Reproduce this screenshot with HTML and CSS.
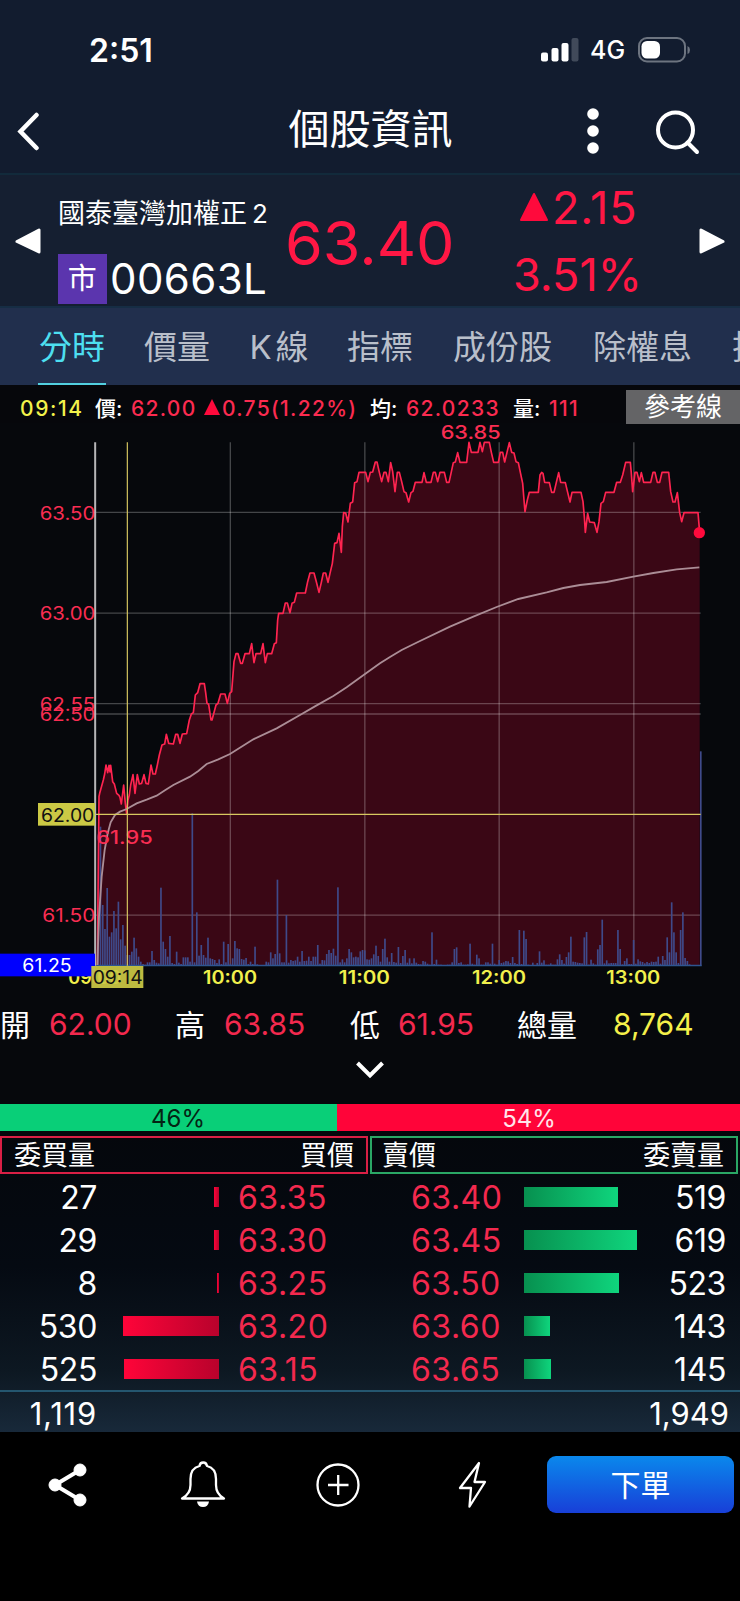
FILE: index.html
```
<!DOCTYPE html>
<html lang="zh-Hant">
<head>
  <meta charset="utf-8">
  <title>個股資訊</title>
  <link rel="stylesheet" href="styles.css">
</head>
<body>
  <div class="status-bar">
    <span class="clock">2:51</span>
    <svg class="signal" width="38" height="24" viewBox="0 0 38 24">
      <rect x="0" y="14.5" width="7" height="9" rx="2"/>
      <rect x="10.5" y="10" width="7" height="13.5" rx="2"/>
      <rect x="20.5" y="5" width="7" height="18.5" rx="2"/>
      <rect class="dim" x="30.5" y="0" width="7" height="23.5" rx="2"/>
    </svg>
    <span class="network">4G</span>
    <svg class="battery" width="53" height="26" viewBox="0 0 53 26">
      <rect class="shell" x="1" y="1" width="46" height="23.5" rx="8"/>
      <rect x="3.5" y="4" width="18.5" height="17.5" rx="5.5"/>
      <path class="nub" d="M49.5 9v8q2.500-1 2.500-4t-2.500-4z"/>
    </svg>
  </div>

  <div class="header">
    <svg class="back" width="26" height="40" viewBox="0 0 26 40"><path d="M21.500 4L5.500 20.500L21.500 37"/></svg>
    <h1>個股資訊</h1>
    <svg class="more" width="12" height="48" viewBox="0 0 12 48">
      <circle cx="6" cy="7" r="5.800"/><circle cx="6" cy="24" r="5.800"/><circle cx="6" cy="41" r="5.800"/>
    </svg>
    <svg class="search" width="46" height="46" viewBox="0 0 46 46"><circle cx="20.500" cy="20" r="17.500"/><path d="M32.500 32.500L42 42"/></svg>
  </div>

  <div class="quote">
    <svg class="prev" width="26" height="26" viewBox="0 0 26 26"><path d="M24 2V24L2 13.500Z"/></svg>
    <div class="stock">
      <div class="stock-name">國泰臺灣加權正<span>2</span></div>
      <div class="stock-code"><span class="badge">市</span><span>00663L</span></div>
    </div>
    <div class="price">63.40</div>
    <div class="change">
      <div class="diff"><svg width="30" height="30" viewBox="0 0 30 30"><path d="M15 2L28 28H2Z"/></svg><span>2.15</span></div>
      <div class="percent">3.51%</div>
    </div>
    <svg class="next" width="26" height="26" viewBox="0 0 26 26"><path d="M2 2V24L24 13.500Z"/></svg>
  </div>

  <div class="tabs">
    <span class="active">分時</span>
    <span>價量</span>
    <span class="k-tab">K<i></i>線</span>
    <span>指標</span>
    <span class="wide">成份股</span>
    <span class="wide">除權息</span>
    <span>技術</span>
  </div>

  <div class="chart-info">
    <span class="time">09:14</span>
    <span class="label">價:</span>
    <span class="value v-price">62.00</span>
    <svg width="16" height="16" viewBox="0 0 16 16"><path d="M8 0L16 16H0Z"/></svg>
    <span class="value v-diff">0.75(1.22%)</span>
    <span class="label">均:</span>
    <span class="value v-avg">62.0233</span>
    <span class="label">量:</span>
    <span class="value v-vol">111</span>
    <span class="ref-button">參考線</span>
  </div>

  <!-- chart units are 1/3 px -->
  <svg class="chart" width="740" height="572" viewBox="0 9 2220 1716">
    <polygon class="area" id="area"/>
    <g class="grid">
      <path d="M270 277H2102M270 579.500H2102M270 851H2102M270 882H2102M270 1485.500H2102"/>
      <path d="M691 67V1635M1094.500 67V1635M1497.500 67V1635M1901.500 67V1635"/>
    </g>
    <g class="volume" id="volume"></g>
    <path class="base" d="M286 1636.500H2105"/>
    <path class="axis" d="M285.500 67V1637"/>

    <g class="y-labels">
      <text x="119" y="299" textLength="167" lengthAdjust="spacingAndGlyphs">63.50</text>
      <text x="119" y="601" textLength="167" lengthAdjust="spacingAndGlyphs">63.00</text>
      <text x="119" y="872" textLength="167" lengthAdjust="spacingAndGlyphs">62.55</text>
      <text x="119" y="903" textLength="167" lengthAdjust="spacingAndGlyphs">62.50</text>
      <text x="127" y="1507" textLength="159" lengthAdjust="spacingAndGlyphs">61.50</text>
    </g>

    <polyline class="line" id="line" points="292,1635 297,1130 299,1120 305,1098 310,1080 314,1062 318,1035 323,1058 327,1036 330,1056 332,1036 338,1085 343,1092 350,1120 357,1126 360,1132 364,1152 371,1095 376,1150 380,1182 384,1140 388,1125 392,1095 399,1064 405,1120 412,1064 418,1092 425,1090 432,1064 438,1090 445,1092 453,1035 459,1062 466,1062 472,1035 478,1005 486,975 494,972 499,943 506,970 520,972 527,943 533,943 540,970 547,942 560,941 568,900 574,882 580,878 586,825 593,818 600,791 613,791 617,818 621,850 626,853 633,900 636,900 648,855 654,850 662,822 675,822 682,850 689,820 695,815 702,725 708,701 714,701 722,730 727,730 735,701 748,701 755,671 762,728 768,701 782,701 789,671 796,728 802,701 815,701 823,671 829,668 833,600 836,580 849,580 856,549 862,549 870,578 876,550 883,547 890,519 916,519 923,485 930,459 942,459 949,485 957,517 964,487 970,459 977,459 984,487 990,460 997,430 1004,370 1011,368 1017,340 1024,397 1027,320 1031,278 1037,279 1044,306 1051,250 1058,246 1064,188 1071,185 1077,157 1097,157 1104,185 1111,157 1118,156 1126,126 1131,126 1138,157 1145,185 1152,157 1158,157 1165,185 1172,128 1178,155 1185,215 1192,157 1198,157 1205,185 1212,215 1218,218 1226,246 1233,218 1239,214 1246,187 1266,187 1272,158 1279,187 1293,187 1300,157 1306,157 1313,185 1320,157 1333,157 1340,187 1347,187 1353,160 1360,128 1366,126 1373,98 1380,127 1400,127 1407,67 1414,97 1434,97 1440,67 1447,95 1453,67 1468,67 1474,97 1481,127 1495,127 1501,97 1508,97 1514,126 1521,97 1528,68 1535,97 1542,99 1548,125 1555,128 1561,157 1568,190 1572,240 1575,275 1582,240 1588,217 1615,217 1620,165 1625,157 1629,160 1634,187 1648,188 1655,217 1662,217 1669,187 1676,158 1682,187 1696,188 1703,217 1710,246 1716,217 1743,217 1749,245 1753,290 1756,337 1763,280 1769,306 1783,308 1791,337 1797,305 1803,250 1810,245 1817,217 1842,217 1850,187 1861,187 1868,165 1877,127 1891,127 1894,160 1898,215 1905,157 1911,157 1918,185 1924,158 1931,187 1952,187 1959,157 1965,157 1972,187 1979,187 1986,157 2006,157 2012,215 2019,246 2025,246 2032,218 2039,278 2045,305 2052,278 2094,278 2099,338"/>
    <polyline class="average" points="292,1635 297,1490 305,1370 314,1290 323,1240 332,1207 345,1185 360,1175 380,1167 410,1150 440,1139 470,1127 495,1111 520,1095 570,1070 595,1053 620,1032 655,1018 690,1002 760,958 830,925 900,885 950,856 1000,828 1040,802 1095,762 1140,730 1170,711 1205,690 1260,663 1350,620 1420,590 1490,561 1555,537 1640,517 1690,504 1740,495 1820,486 1900,470 1960,459 2030,448 2098,442"/>
    <circle class="dot" cx="2098" cy="338" r="17"/>
    <g class="extremes">
      <text x="1322" y="57" textLength="180" lengthAdjust="spacingAndGlyphs">63.85</text>
      <text x="289" y="1273" textLength="169" lengthAdjust="spacingAndGlyphs">61.95</text>
    </g>
    <path class="cross" d="M288 1183H2102M382 67V1637"/>

    <g class="x-labels">
      <text x="205" y="1692" textLength="158">09:00</text>
      <text x="609" y="1692" textLength="162" lengthAdjust="spacingAndGlyphs">10:00</text>
      <text x="1016" y="1692" textLength="154" lengthAdjust="spacingAndGlyphs">11:00</text>
      <text x="1416" y="1692" textLength="162" lengthAdjust="spacingAndGlyphs">12:00</text>
      <text x="1819" y="1692" textLength="162" lengthAdjust="spacingAndGlyphs">13:00</text>
    </g>
    <rect class="tag" x="114" y="1149" width="171" height="68"/>
    <text class="tag-text" x="123" y="1205" textLength="160" lengthAdjust="spacingAndGlyphs">62.00</text>
    <rect class="prev-close" x="0" y="1601" width="285" height="68"/>
    <text class="prev-text" x="67" y="1656" textLength="148" lengthAdjust="spacingAndGlyphs">61.25</text>
    <rect class="tag see-through" x="274" y="1638" width="156" height="66"/>
    <text class="tag-text" x="278" y="1692" textLength="150" lengthAdjust="spacingAndGlyphs">09:14</text>
  </svg>

  <div class="summary">
    <span class="name">開</span><span class="num">62.00</span>
    <span class="name">高</span><span class="num">63.85</span>
    <span class="name">低</span><span class="num">61.95</span>
    <span class="name">總量</span><span class="num total">8,764</span>
  </div>
  <div class="expand">
    <svg width="30" height="20" viewBox="0 0 30 20"><path d="M2.500 3L15 15.500L27.500 3"/></svg>
  </div>

  <div class="ratio">
    <div class="ratio-buy">46%</div>
    <div class="ratio-sell">54%</div>
  </div>

  <div class="book">
    <div class="book-head">
      <div class="head-buy"><span>委買量</span><span>買價</span></div>
      <div class="head-sell"><span>賣價</span><span>委賣量</span></div>
    </div>
    <div class="row"><span class="qty">27</span><i class="buy" style="width:5px"></i><span class="bid">63.35</span><span class="ask">63.40</span><i class="sell" style="width:94px"></i><span class="qty">519</span></div>
    <div class="row"><span class="qty">29</span><i class="buy" style="width:5px"></i><span class="bid">63.30</span><span class="ask">63.45</span><i class="sell" style="width:113px"></i><span class="qty">619</span></div>
    <div class="row"><span class="qty">8</span><i class="buy" style="width:2px"></i><span class="bid">63.25</span><span class="ask">63.50</span><i class="sell" style="width:95px"></i><span class="qty">523</span></div>
    <div class="row"><span class="qty">530</span><i class="buy" style="width:96px"></i><span class="bid">63.20</span><span class="ask">63.60</span><i class="sell" style="width:26px"></i><span class="qty">143</span></div>
    <div class="row"><span class="qty">525</span><i class="buy" style="width:95px"></i><span class="bid">63.15</span><span class="ask">63.65</span><i class="sell" style="width:27px"></i><span class="qty">145</span></div>
    <div class="sum"><span>1,119</span><span>1,949</span></div>
  </div>

  <div class="toolbar">
    <div class="tool">
      <svg width="46" height="50" viewBox="0 0 46 50" class="share"><path d="M35 10L10 25L35 40"/><circle cx="35" cy="10" r="6"/><circle cx="10" cy="25" r="6"/><circle cx="35" cy="40" r="6"/></svg>
    </div>
    <div class="tool">
      <svg width="46" height="50" viewBox="0 0 46 50"><path d="M2 38.500Q10.500 34 10.500 25V19Q10.500 8 19.500 6Q20 2.500 23.200 2.500T27 6Q36 8 36 19V25Q36 34 44 38.500Z"/><path class="solid" d="M17 41.500H29Q28 47 23 47T17 41.500Z"/></svg>
    </div>
    <div class="tool">
      <svg width="46" height="50" viewBox="0 0 46 50"><circle cx="23" cy="25" r="20.500"/><path class="plus" d="M13 25H33.500M23.200 15V35"/></svg>
    </div>
    <div class="tool">
      <svg width="46" height="50" viewBox="0 0 46 50"><path d="M29 3L10 28H21L19.500 46.500L35 22H24.500Z"/></svg>
    </div>
    <button class="order">下單</button>
  </div>

  <script src="chart.js"></script>
</body>
</html>
```
FILE: styles.css
```
* {
  box-sizing: border-box;
}

body {
  margin: 0;
  width: 740px;
  height: 1601px;
  overflow: hidden;
  background: #000;
  color: #fff;
  font-family: Inter, "Noto Sans CJK TC", sans-serif;
}

svg {
  display: block;
  flex: none;
}

.status-bar {
  height: 92px;
  padding: 8px 49px 0 89px;
  background: #121c2f;
  display: flex;
  align-items: center;
}
.clock {
  flex: 1;
  font-size: 32px;
  font-weight: 600;
}
.signal {
  fill: #fff;
}
.signal .dim {
  fill: #414a5a;
}
.network {
  width: 59px;
  padding-left: 11px;
  font-size: 25px;
  font-weight: 500;
}
.battery {
  fill: #fff;
}
.battery .shell {
  fill: none;
  stroke: #6d7480;
  stroke-width: 2;
}
.battery .nub {
  fill: #6d7480;
}

.header {
  height: 83px;
  padding: 0 39px 4px 15px;
  background: #121c2f;
  border-bottom: 2px solid #122a3b;
  display: flex;
  align-items: center;
}
.header h1 {
  margin: 0 0 9px;
  width: 546px;
  padding-left: 113px;
  text-align: center;
  font-size: 41px;
  font-weight: 400;
}
.back {
  fill: none;
  stroke: #fff;
  stroke-width: 4.5;
  stroke-linecap: round;
}
.more {
  fill: #fff;
}
.search {
  margin: 4px 0 0 56px;
  fill: none;
  stroke: #fff;
  stroke-width: 4;
  stroke-linecap: round;
}

.quote {
  height: 133px;
  padding: 0 15px;
  background: #151f31;
  border-bottom: 2px solid #162d44;
  display: flex;
  align-items: center;
  white-space: nowrap;
}
.prev, .next {
  fill: #fff;
  stroke: #fff;
  stroke-width: 3;
  stroke-linejoin: round;
}
.next {
  margin-left: auto;
}
.stock {
  width: 244px;
  padding-left: 17px;
}
.stock-name {
  height: 76px;
  line-height: 76px;
  font-size: 27px;
}
.stock-name span {
  margin-left: 5px;
  font-size: 26px;
}
.stock-code {
  height: 54px;
  display: flex;
  align-items: center;
  font-size: 42px;
  letter-spacing: 0.4px;
}
.badge {
  width: 49px;
  height: 50px;
  margin-right: 3px;
  background: #5b35ae;
  font-size: 29px;
  line-height: 50px;
  text-align: center;
}
.price {
  width: 228px;
  padding-top: 4px;
  color: #ff1744;
  font-size: 61px;
}
.change {
  width: 171px;
  color: #ff1744;
  font-size: 45px;
  line-height: 67px;
}
.diff {
  display: flex;
  align-items: center;
  padding-left: 6px;
  letter-spacing: 0.8px;
}
.diff svg {
  margin-right: 3px;
  fill: #ff0a3c;
  stroke: #ff0a3c;
  stroke-width: 2;
  stroke-linejoin: round;
}

.tabs {
  height: 77px;
  padding-left: 38px;
  background: #212f4d;
  display: flex;
  overflow: hidden;
  color: #b9bfca;
  font-size: 33px;
  line-height: 78px;
  white-space: nowrap;
}
.tabs span {
  flex: none;
  width: 68px;
  height: 77px;
  margin-right: 37px;
  text-align: center;
}
.tabs .active {
  color: #4ddff0;
  border-bottom: 2px solid #52d0e0;
}
.tabs .k-tab {
  width: 62px;
  margin-right: 36px;
}
.tabs .k-tab i {
  padding-left: 4px;
}
.tabs .wide {
  width: 103px;
}

.chart-info {
  height: 38px;
  padding: 5px 0 0 20px;
  background: #06070b;
  display: flex;
  align-items: center;
  font-size: 21px;
  font-weight: 500;
  white-space: nowrap;
}
.chart-info svg {
  width: 16px;
  margin-right: 2px;
  fill: #ff0a3c;
}
.time {
  width: 75px;
  padding-top: 3px;
  color: #f2f24a;
  letter-spacing: 1.6px;
}
.label {
  width: 36px;
}
.value {
  padding-top: 3px;
  color: #fb2b50;
  letter-spacing: 1.3px;
}
.v-price { width: 73px; }
.v-diff { width: 148px; }
.v-avg { width: 107px; }
.v-vol { width: 77px; }
.ref-button {
  width: 114px;
  height: 34px;
  background: #646466;
  font-size: 26px;
  font-weight: 400;
  line-height: 33px;
  text-align: center;
}

.chart {
  background: #06080c;
}
.chart text {
  font-size: 54px;
}
.area {
  fill: #3a0715;
}
.grid {
  fill: none;
  stroke: #fff;
  stroke-opacity: 0.25;
  stroke-width: 4;
}
.axis {
  stroke: #b5b5b7;
  stroke-width: 6;
}
.base {
  stroke: #2e5590;
  stroke-width: 4;
}
.volume {
  fill: #3f4a8a;
}
.line {
  fill: none;
  stroke: #ff2450;
  stroke-width: 5;
  stroke-linejoin: round;
}
.average {
  fill: none;
  stroke: #ab8d96;
  stroke-width: 5.5;
}
.dot {
  fill: #ff0a3c;
}
.cross {
  fill: none;
  stroke: #d8c860;
  stroke-width: 3.5;
}
.y-labels, .extremes {
  fill: #f92d52;
}
.extremes {
  font-weight: 500;
}
.x-labels {
  fill: #f0f04c;
  font-weight: 600;
}
.tag {
  fill: #cbc945;
}
.see-through {
  fill-opacity: 0.93;
}
.tag-text {
  fill: #111;
}
.prev-close {
  fill: #0000fe;
}
.prev-text {
  fill: #fff;
}

.summary {
  height: 57px;
  padding-bottom: 2px;
  background: #06080c;
  display: grid;
  grid-template-columns: 49px 126px 49px 126px 48px 119px 96px 127px;
  align-items: center;
  font-size: 30px;
  white-space: nowrap;
}
.summary .num {
  padding-top: 2px;
}
.num {
  color: #f3294e;
}
.num.total {
  color: #f5f04a;
}
.expand {
  height: 52px;
  padding-top: 8px;
  background: #06080c;
  display: flex;
  justify-content: center;
}
.expand path {
  fill: none;
  stroke: #fff;
  stroke-width: 4;
}

.ratio {
  height: 27px;
  display: flex;
  font-size: 24px;
  line-height: 29px;
  text-align: center;
}
.ratio-buy {
  width: 337px;
  padding-left: 19px;
  background: #09cf78;
  color: #042414;
}
.ratio-sell {
  flex: 1;
  padding-right: 19px;
  background: #ff0439;
  color: #ffe5ea;
}

.book {
  height: 301px;
  padding-top: 5px;
  background: linear-gradient(#05070c, #050a12 45%, #0d1822 80%, #18293a);
}
.book-head {
  height: 38px;
  margin-bottom: 2px;
  display: flex;
  gap: 2px;
  font-size: 27px;
  line-height: 36px;
}
.book-head div {
  width: 368px;
  padding: 0 12px;
  display: flex;
  justify-content: space-between;
}
.book-head .head-buy {
  border: 2px solid #da1f45;
}
.book-head .head-sell {
  padding-left: 10px;
  border: 2px solid #2aa765;
}
.row {
  height: 42.9px;
  display: grid;
  grid-template-columns: 97px 122px 192px 113px 125px 77px;
  align-items: center;
  font-size: 32px;
}
.row .qty, .sum span {
  text-align: right;
}
.row .qty {
  letter-spacing: -0.4px;
}
.row i {
  height: 20px;
}
.row .buy {
  justify-self: end;
  background: linear-gradient(to right, #ff0439, #b8022c);
}
.row .sell {
  background: linear-gradient(to right, #07904f, #0fd57d);
}
.bid, .ask {
  color: #f3294e;
  letter-spacing: 0.5px;
}
.bid {
  padding-left: 19px;
}
.sum {
  height: 41px;
  padding-right: 11px;
  border-top: 2px solid #24566f;
  display: flex;
  justify-content: space-between;
  font-size: 31px;
  line-height: 44px;
}
.sum span:first-child {
  width: 97px;
  letter-spacing: 0.8px;
}

.toolbar {
  height: 170px;
  padding: 24px 6px 0 0;
  background: #000;
  display: flex;
}
.tool {
  width: 135px;
  height: 57px;
  display: flex;
  align-items: center;
  justify-content: center;
}
.tool svg {
  fill: none;
  stroke: #fff;
  stroke-width: 2.3;
  stroke-linejoin: round;
}
.tool .share {
  fill: #fff;
  stroke-width: 1;
}
.tool .share path {
  fill: none;
  stroke-width: 4;
}
.tool .solid {
  fill: #fff;
  stroke: none;
}
.order {
  width: 187px;
  height: 57px;
  margin-left: 7px;
  padding-bottom: 5px;
  border: none;
  border-radius: 9px;
  background: linear-gradient(#0a88ec, #183fd8);
  color: #fff;
  font-family: inherit;
  font-size: 30px;
}
```
FILE: chart.js
```
// one bar per minute, 09:00 - 13:30
var volumes = [
  0, 150, 417, 182, 110, 233, 87, 100, 164, 112, 192, 79, 122, 60, 32,
  32, 42, 84, 52, 27, 12, 5, 3, 10, 10, 44, 17, 9, 7, 234,
  72, 50, 27, 89, 8, 5, 42, 9, 5, 25, 25, 25, 12, 457, 10,
  160, 30, 62, 32, 24, 84, 22, 20, 17, 8, 19, 5, 72, 10, 65,
  6, 22, 74, 52, 50, 20, 18, 23, 5, 12, 5, 57, 4, 2, 2,
  2, 12, 10, 40, 22, 35, 258, 37, 10, 10, 152, 9, 17, 14, 16,
  27, 12, 44, 14, 15, 27, 14, 27, 27, 62, 6, 17, 16, 35, 47,
  38, 51, 30, 235, 10, 19, 10, 22, 50, 40, 25, 27, 25, 43, 47,
  46, 19, 18, 22, 34, 60, 29, 12, 50, 81, 25, 12, 38, 11, 9,
  56, 8, 29, 47, 9, 22, 7, 22, 9, 5, 4, 14, 12, 6, 3,
  100, 5, 18, 3, 3, 2, 2, 3, 3, 10, 50, 55, 8, 10, 3,
  3, 4, 66, 6, 3, 33, 22, 3, 3, 10, 10, 6, 66, 6, 3,
  17, 8, 10, 14, 13, 8, 26, 8, 5, 107, 5, 105, 80, 3, 2,
  9, 2, 8, 43, 9, 16, 3, 3, 7, 3, 3, 19, 34, 17, 6,
  26, 40, 87, 12, 11, 9, 8, 7, 85, 101, 3, 18, 7, 3, 49,
  62, 138, 7, 16, 7, 8, 8, 8, 107, 50, 4, 14, 22, 5, 5,
  77, 6, 19, 13, 11, 7, 11, 8, 12, 11, 12, 27, 6, 29, 17,
  85, 40, 190, 100, 40, 8, 107, 160, 23, 14, 4, 0, 0, 0, 0
];
// closing auction at 13:30
volumes[270] = 643;

var group = document.querySelector('#volume');
for (var i = 0; i < volumes.length; i++) {
  if (!volumes[i]) continue;
  var bar = document.createElementNS('http://www.w3.org/2000/svg', 'rect');
  bar.setAttribute('x', 285.5 + i * 6.72);
  bar.setAttribute('y', 1637 - volumes[i]);
  bar.setAttribute('width', 5);
  bar.setAttribute('height', volumes[i]);
  group.appendChild(bar);
}

// the filled area follows the price line down to the base
var points = document.querySelector('#line').getAttribute('points');
document.querySelector('#area').setAttribute('points', points + ' 2099,1636 292,1636');
```
